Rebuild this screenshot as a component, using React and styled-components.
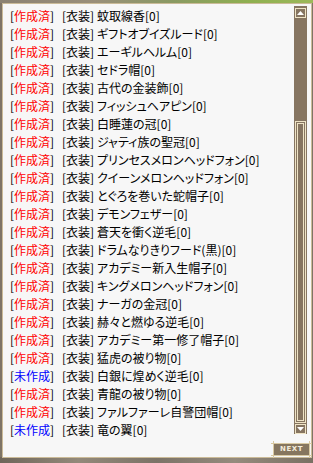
import React from 'react';
import styled, { createGlobalStyle } from 'styled-components';

const items = [
    { done: true, name: '蚊取線香' },
    { done: true, name: 'ギフトオブイズルード' },
    { done: true, name: 'エーギルヘルム' },
    { done: true, name: 'セドラ帽' },
    { done: true, name: '古代の金装飾' },
    { done: true, name: 'フィッシュヘアピン' },
    { done: true, name: '白睡蓮の冠' },
    { done: true, name: 'ジャティ族の聖冠' },
    { done: true, name: 'プリンセスメロンヘッドフォン' },
    { done: true, name: 'クイーンメロンヘッドフォン' },
    { done: true, name: 'とぐろを巻いた蛇帽子' },
    { done: true, name: 'デモンフェザー' },
    { done: true, name: '蒼天を衝く逆毛' },
    { done: true, name: 'ドラムなりきりフード(黒)' },
    { done: true, name: 'アカデミー新入生帽子' },
    { done: true, name: 'キングメロンヘッドフォン' },
    { done: true, name: 'ナーガの金冠' },
    { done: true, name: '赫々と燃ゆる逆毛' },
    { done: true, name: 'アカデミー第一修了帽子' },
    { done: true, name: '猛虎の被り物' },
    { done: false, name: '白銀に煌めく逆毛' },
    { done: true, name: '青龍の被り物' },
    { done: true, name: 'ファルファーレ自警団帽' },
    { done: false, name: '竜の翼' },
];

const GlobalStyle = createGlobalStyle`
    html, body {
        margin: 0;
        padding: 0;
    }
    body {
        font-family: "Noto Sans CJK JP", "DejaVu Sans", sans-serif;
        background: #7e7466;
    }
`;

function App() {
    return (
        <Page>
            <GlobalStyle />
            <Panel>
                <Main>
                    <List>
                        {items.map((it, i) => (
                            <Row key={i}>
                                <Status $done={it.done}>
                                    [<span>{it.done ? '作成済' : '未作成'}</span>]
                                </Status>
                                <Category>[衣装]</Category>
                                <Name>{it.name}[0]</Name>
                            </Row>
                        ))}
                    </List>
                    <ScrollTrack>
                        <ArrowBtn>
                            <svg width="7" height="4" viewBox="0 0 7 4">
                                <path d="M3.5 0 L7 4 L0 4 Z" fill="#ffffff" />
                            </svg>
                        </ArrowBtn>
                        <ThumbArea>
                            <Thumb />
                        </ThumbArea>
                        <ArrowBtn>
                            <svg width="7" height="4" viewBox="0 0 7 4">
                                <path d="M0 0 L7 0 L3.5 4 Z" fill="#ffffff" />
                            </svg>
                        </ArrowBtn>
                    </ScrollTrack>
                </Main>
                <Footer>
                    <NextButton>
                        <Corner $pos="tl" />
                        <Corner $pos="tr" />
                        <Corner $pos="bl" />
                        <Corner $pos="br" />
                        NEXT
                    </NextButton>
                </Footer>
            </Panel>
        </Page>
    );
}

const Page = styled.div`
    width: 313px;
    height: 463px;
    box-sizing: border-box;
    padding: 3px 1px 5px 2px;
    background:
        linear-gradient(90deg, #8b8272 0%, #9a8f7a 30%, #8a9a63 55%, #8fb050 80%, #9cb85a 100%) top / 100% 3px no-repeat,
        linear-gradient(90deg, #6f665a 0%, #93897a 25%, #7c7367 50%, #958b7d 75%, #7a7063 100%) bottom / 100% 6px no-repeat,
        #7e7466;
`;

const Panel = styled.div`
    height: 100%;
    box-sizing: border-box;
    border: 1px solid #cbbb98;
    background: #f7f7f7;
    display: flex;
    flex-direction: column;
`;

const Main = styled.div`
    display: flex;
    height: 430px;
    padding-right: 4px;
`;

const List = styled.div`
    flex: 1;
    padding: 3px 0 0 7px;
`;

const Row = styled.div`
    display: flex;
    height: 18px;
    line-height: 18px;
    font-size: 12px;
    color: #000;
    white-space: nowrap;
    font-feature-settings: "palt";
`;

const Status = styled.span`
    width: 52px;
    span {
        color: ${props => (props.$done ? '#ff0000' : '#0000ff')};
    }
`;

const Category = styled.span`
    width: 35px;
`;

const Name = styled.span``;

const ScrollTrack = styled.div`
    width: 13px;
    margin-top: 2px;
    background: #867561;
    box-sizing: border-box;
    padding: 2px 1px 0 1px;
    display: flex;
    flex-direction: column;
`;

const ArrowBtn = styled.div`
    height: 10px;
    flex: 0 0 10px;
    box-sizing: border-box;
    border: 1px solid #efe4c6;
    display: flex;
    align-items: center;
    justify-content: center;
    svg {
        display: block;
    }
`;

const ThumbArea = styled.div`
    flex: 1;
    padding-top: 103px;
    padding-bottom: 1px;
    display: flex;
    flex-direction: column;
`;

const Thumb = styled.div`
    flex: 1;
    width: 11px;
    box-sizing: border-box;
    border: 1px solid #efe4c6;
    box-shadow: inset 0 0 0 1px #867561, inset 0 0 0 2px #efe4c6;
`;

const Footer = styled.div`
    flex: 1;
    display: flex;
    justify-content: flex-end;
    align-items: flex-end;
    padding-right: 1px;
`;

const NextButton = styled.div`
    position: relative;
    width: 37px;
    height: 13px;
    margin-bottom: 1px;
    box-sizing: border-box;
    background: #86765f;
    border: 1px solid #d9c9a2;
    color: #f3ecdc;
    font-family: "DejaVu Sans", sans-serif;
    font-weight: bold;
    font-size: 7px;
    letter-spacing: 0.5px;
    line-height: 11px;
    text-align: center;
`;

const Corner = styled.span`
    position: absolute;
    width: 5px;
    height: 5px;
    ${props => (props.$pos[0] === 't' ? 'top: -3px;' : 'bottom: -3px;')}
    ${props => (props.$pos[1] === 'l' ? 'left: -3px;' : 'right: -3px;')}
    background:
        linear-gradient(#d9c9a2, #d9c9a2) center / 1px 5px no-repeat,
        linear-gradient(#d9c9a2, #d9c9a2) center / 5px 1px no-repeat;
`;

export default App;
